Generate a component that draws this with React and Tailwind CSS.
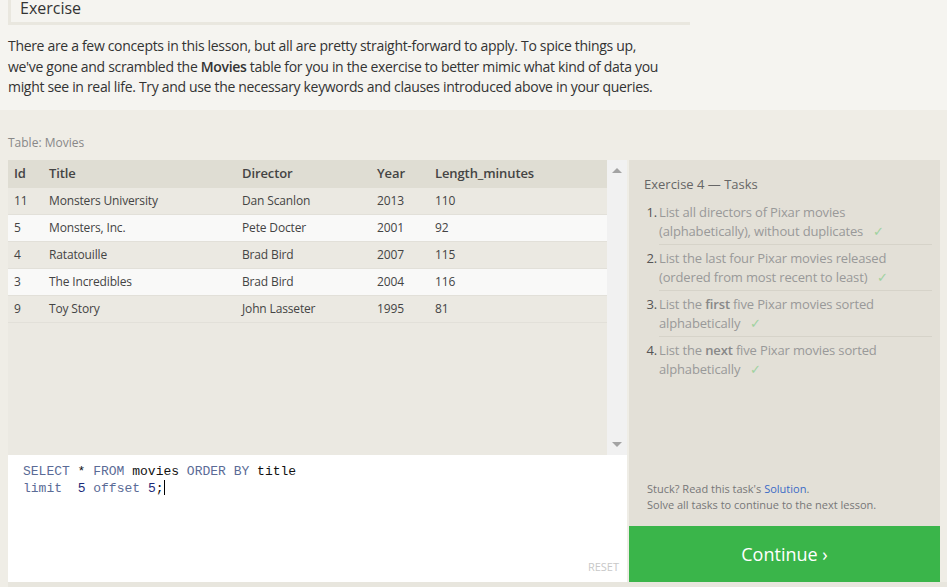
import React from "react";

const rows = [
  ["11", "Monsters University", "Dan Scanlon", "2013", "110"],
  ["5", "Monsters, Inc.", "Pete Docter", "2001", "92"],
  ["4", "Ratatouille", "Brad Bird", "2007", "115"],
  ["3", "The Incredibles", "Brad Bird", "2004", "116"],
  ["9", "Toy Story", "John Lasseter", "1995", "81"],
];

function Check() {
  return <span className="ml-[10px] text-[#9fd29f]">✓</span>;
}

export default function App() {
  const font = { fontFamily: '"Open Sans", "Noto Sans", sans-serif' };
  return (
    <div className="w-[947px] h-[587px] overflow-hidden bg-[#efede6] text-[#333]" style={font}>
      {/* top section */}
      <div className="h-[110px] bg-[#f5f4f0] px-[8px] pt-0">
        <div className="w-[682px] h-[25px] border-l-[3px] border-b-[3px] border-[#e9e7df] pl-[9px]">
          <div className="text-[16px] leading-[16px] text-[#333]">Exercise</div>
        </div>
        <p className="mt-[11px] text-[14px] leading-[20.5px] text-[#333] tracking-[-0.32px]">
          There are a few concepts in this lesson, but all are pretty straight-forward to apply. To spice things up,
          <br />
          we've gone and scrambled the <b className="font-semibold">Movies</b> table for you in the exercise to better mimic what kind of data you
          <br />
          might see in real life. Try and use the necessary keywords and clauses introduced above in your queries.
        </p>
      </div>

      <div className="pl-[8px] pt-[25px]">
        <div className="text-[12px] leading-[16px] text-[#888] mb-[9px]">Table: Movies</div>
        <div className="flex">
          {/* left column */}
          <div className="w-[619px] flex flex-col">
            <div className="flex h-[295px]">
              <div className="w-[599px] bg-[#ebe9e2]">
                <div className="flex h-[28px] items-center bg-[#dfddd3] text-[13px] font-semibold text-[#444] tracking-[-0.1px]">
                  <div className="w-[41px] pl-[6px]">Id</div>
                  <div className="w-[193px]">Title</div>
                  <div className="w-[135px]">Director</div>
                  <div className="w-[58px]">Year</div>
                  <div>Length_minutes</div>
                </div>
                {rows.map((r, i) => (
                  <div
                    key={i}
                    className={
                      "flex h-[27px] items-center text-[12px] text-[#444] tracking-[-0.15px] border-b border-[#e2e0d9] " +
                      (i % 2 === 1 ? "bg-[#f9f9f8]" : "bg-[#ebe9e2]")
                    }
                  >
                    <div className="w-[41px] pl-[6px]">{r[0]}</div>
                    <div className="w-[193px]">{r[1]}</div>
                    <div className="w-[135px]">{r[2]}</div>
                    <div className="w-[58px]">{r[3]}</div>
                    <div>{r[4]}</div>
                  </div>
                ))}
              </div>
              <div className="w-[20px] bg-[#f1f1f1] flex flex-col justify-between items-center py-[8px]">
                <div className="w-0 h-0 border-l-[5px] border-r-[5px] border-b-[5px] border-l-transparent border-r-transparent border-b-[#a3a3a3]" />
                <div className="w-0 h-0 border-l-[5px] border-r-[5px] border-t-[5px] border-l-transparent border-r-transparent border-t-[#a3a3a3]" />
              </div>
            </div>
            <div className="h-[127px] bg-white relative pl-[15px] pt-[8px]">
              <div
                className="text-[13px] leading-[17px] text-[#111] whitespace-pre"
                style={{ fontFamily: '"Liberation Mono", "DejaVu Sans Mono", monospace' }}
              >
                <div>
                  <span className="text-[#5a6b96]">SELECT</span>{" * "}<span className="text-[#5a6b96]">FROM</span>{" movies "}
                  <span className="text-[#5a6b96]">ORDER BY</span>{" title"}
                </div>
                <div>
                  <span className="text-[#5a6b96]">limit</span>{"  "}<span className="text-[#1a2a7a]">5</span>{" "}
                  <span className="text-[#5a6b96]">offset</span>{" "}<span className="text-[#1a2a7a]">5</span>
                  {";"}
                  <span className="inline-block w-px h-[15px] bg-black align-middle -mt-[2px]" />
                </div>
              </div>
              <div className="absolute right-[8px] bottom-[7px] text-[11px] text-[#c8c8c8]">RESET</div>
            </div>
          </div>
          {/* right panel */}
          <div className="ml-[2px] w-[311px] flex flex-col">
            <div className="h-[366px] bg-[#e3e0d7] flex flex-col justify-between pl-[15px] pr-[8px] pt-[16px] pb-[13px]">
              <div>
                <div className="text-[13px] leading-[17px] text-[#666]">Exercise 4 — Tasks</div>
                <ol className="mt-[10px] text-[13px] leading-[19px] text-[#999] tracking-[-0.15px]">
                  {[
                    [<>List all directors of Pixar movies</>, <>(alphabetically), without duplicates</>],
                    [<>List the last four Pixar movies released</>, <>(ordered from most recent to least)</>],
                    [<>List the <b className="font-semibold text-[#888]">first</b> five Pixar movies sorted</>, <>alphabetically</>],
                    [<>List the <b className="font-semibold text-[#888]">next</b> five Pixar movies sorted</>, <>alphabetically</>],
                  ].map((t, i) => (
                    <li key={i} className="flex">
                      <span className="w-[12px] ml-[1px] shrink-0 text-right text-[#555]">{i + 1}.</span>
                      <div className={"flex-1 ml-[2px] " + (i < 3 ? "border-b border-[#d6d3c9] pb-[3px] mb-[4px]" : "")}>
                        <div>{t[0]}</div>
                        <div>
                          {t[1]}
                          <Check />
                        </div>
                      </div>
                    </li>
                  ))}
                </ol>
              </div>
              <div className="text-[11px] leading-[16px] text-[#777] pl-[3px]">
                <div>
                  Stuck? Read this task's <span className="text-[#3a6bc6]">Solution</span>.
                </div>
                <div>Solve all tasks to continue to the next lesson.</div>
              </div>
            </div>
            <div className="h-[56px] bg-[#3ab54a] flex items-center justify-center text-white text-[18px]">
              Continue ›
            </div>
          </div>
        </div>
        <div className="h-[5px] bg-[#e8e6de]" />
      </div>
    </div>
  );
}
